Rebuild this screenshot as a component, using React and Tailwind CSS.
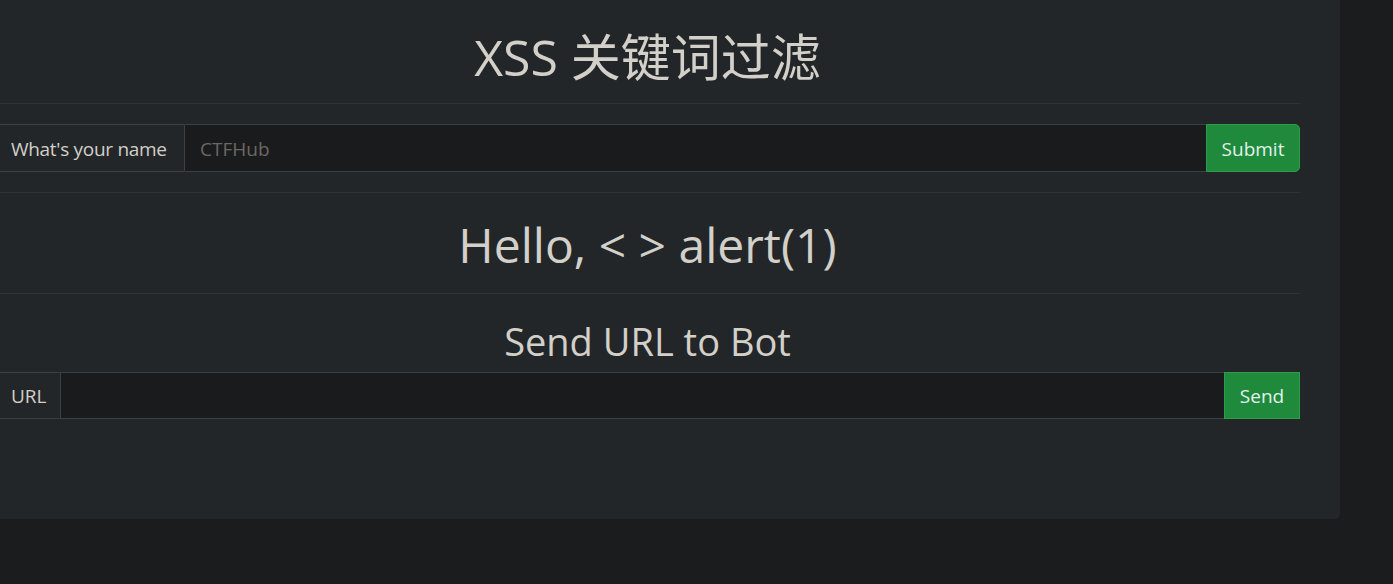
import React from 'react';

const font = { fontFamily: '"Open Sans", "Noto Sans CJK SC", sans-serif' };

export default function App() {
  return (
    <div className="min-h-[584px] w-full overflow-hidden bg-[#1b1c1e]" style={font}>
      {/* Card */}
      <div className="ml-[-45px] w-[1385px] rounded-br-[5px] bg-[#222628] px-[40px] pt-[27px] pb-[100px] text-[#d3cfc9]">
        <h1 className="h-[60px] text-center text-[50px] leading-[60px] font-normal">XSS 关键词过滤</h1>
        <hr className="mt-[16px] border-t border-[#2e3336]" />

        {/* name form */}
        <div className="mt-[20px] flex h-[48px] text-[20px]">
          <span className="flex w-[190px] shrink-0 items-center whitespace-nowrap rounded-l-[5px] border border-[#3b4043] bg-[#222628] pt-[2px] pl-[15px] text-[19px] tracking-[-0.3px] text-[#d3cfc9]">
            What's your name
          </span>
          <input
            className="min-w-0 flex-1 border-y border-[#3b4043] bg-[#1a1b1d] px-[15px] pt-[2px] text-[19px] text-[#d3cfc9] outline-none placeholder:text-[#6c6861]"
            placeholder="CTFHub"
          />
          <button className="w-[94px] shrink-0 rounded-r-[5px] border border-[#2aa046] bg-[#1f8a3b] pt-[2px] text-[19px] text-[#e3f1ee]">
            Submit
          </button>
        </div>
        <hr className="mt-[20px] border-t border-[#2e3336]" />

        <h1 className="mt-[22px] h-[60px] text-center text-[48px] leading-[60px] font-normal">Hello, &lt; &gt; alert(1)</h1>
        <hr className="mt-[18px] border-t border-[#2e3336]" />

        <h2 className="mt-[23px] h-[48px] text-center text-[38px] leading-[48px] font-normal">Send URL to Bot</h2>

        {/* url form */}
        <div className="mt-[7px] flex h-[47px] text-[20px]">
          <span className="flex w-[66px] shrink-0 items-center border border-[#3b4043] bg-[#222628] pt-[2px] pl-[15px] text-[19px] text-[#d3cfc9]">URL</span>
          <input className="min-w-0 flex-1 border-y border-[#3b4043] bg-[#1a1b1d] px-[15px] text-[#d3cfc9] outline-none" />
          <button className="w-[76px] shrink-0 border border-[#2aa046] bg-[#1f8a3b] pt-[2px] text-[19px] text-[#e3f1ee]">Send</button>
        </div>
      </div>
    </div>
  );
}
